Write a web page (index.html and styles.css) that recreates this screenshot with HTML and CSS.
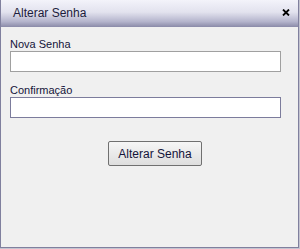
FILE: index.html
```html
<!DOCTYPE html>
<html lang="pt">
<head>
  <meta charset="UTF-8">
  <meta name="viewport" content="width=device-width, initial-scale=1.0">
  <title>Alterar Senha</title>
  <link rel="stylesheet" href="styles.css">
</head>
<body>
  <!-- Janela de alteração de senha -->
  <div class="janela">
    <div class="titulo">
      <span>Alterar Senha</span>
      <svg class="fechar" width="8" height="7" viewBox="0 0 8 7">
        <path d="M1 0.5 L7 6.5 M7 0.5 L1 6.5" stroke="#000" stroke-width="1.8" fill="none"/>
      </svg>
    </div>

    <div class="conteudo">
      <div class="campo">
        <label for="nova">Nova Senha</label>
        <input type="password" id="nova" class="entrada">
      </div>

      <div class="campo">
        <label for="confirmacao">Confirmação</label>
        <input type="password" id="confirmacao" class="entrada entrada-foco">
      </div>

      <div class="acoes">
        <button class="botao">Alterar Senha</button>
      </div>
    </div>
  </div>
</body>
</html>
```

FILE: styles.css
```css
/* Estilos gerais */
body {
  margin: 0;
  background-color: #c4c4d0;
  font-family: "Liberation Sans", Arial, sans-serif;
  font-size: 12px;
  color: #14143a;
}

/* Janela */
.janela {
  width: 299px;
  height: 248px;
  box-sizing: border-box;
  background-color: #f0f0f0;
  border: 1px solid #80809e;
  border-top: none;
}

/* Barra de título */
.titulo {
  height: 27px;
  line-height: 27px;
  padding: 0 8px 0 12px;
  display: flex;
  justify-content: space-between;
  align-items: center;
  background: linear-gradient(#f3f3fa 0%, #e2e2ee 45%, #b4b4cc 80%, #8a8aa8 100%);
  color: #1c1c3c;
}

.fechar {
  margin-top: -2px;
}

/* Conteúdo */
.conteudo {
  padding: 11px 17px 0 9px;
}

.campo {
  margin-bottom: 12px;
}

label {
  display: block;
  font-size: 11px;
  line-height: 13px;
}

.entrada {
  display: block;
  width: 100%;
  height: 21px;
  box-sizing: border-box;
  margin: 0;
  border: 1px solid #a0a0a0;
  background-color: #fff;
  outline: none;
}

.entrada-foco {
  border-color: #7c7c9c;
}

/* Botão */
.acoes {
  padding: 11px 0 0 98px;
}

.botao {
  width: 94px;
  height: 25px;
  padding: 0;
  border: 1px solid #707070;
  border-radius: 2px;
  background: linear-gradient(#f6f6f6, #dedede);
  font-family: "Liberation Sans", Arial, sans-serif;
  font-size: 12px;
  color: #14143a;
}
```
